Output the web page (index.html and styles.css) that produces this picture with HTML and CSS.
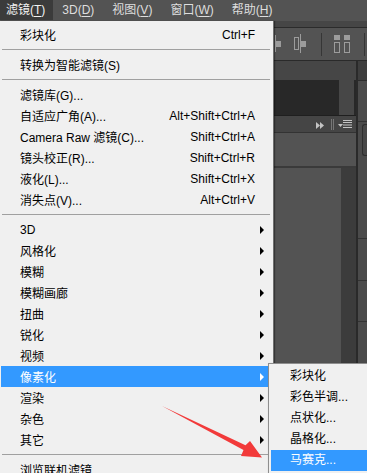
FILE: index.html
```html
<!DOCTYPE html>
<html lang="zh-CN">
<head>
<meta charset="utf-8">
<title>Photoshop 滤镜菜单</title>
<link rel="stylesheet" href="styles.css">
</head>
<body>
<div class="menubar">
  <span class="mb-item first active">滤镜(<u>T</u>)</span>
  <span class="mb-item">3D(<u>D</u>)</span>
  <span class="mb-item">视图(<u>V</u>)</span>
  <span class="mb-item">窗口(<u>W</u>)</span>
  <span class="mb-item">帮助(<u>H</u>)</span>
</div>
<div class="appstrip"></div>
<div class="options">
  <svg class="opt-icons" width="95" height="32" viewBox="0 0 95 32">
    <g fill="none" stroke="#9c9c9c" stroke-width="1">
      <line x1="3.5" y1="7" x2="3.5" y2="24"/>
      <rect x="22.5" y="9.5" width="4" height="12"/>
      <line x1="28.5" y1="6" x2="28.5" y2="25"/>
      <rect x="62.5" y="14.5" width="5" height="10"/>
      <rect x="72.5" y="14.5" width="5" height="10"/>
    </g>
    <g fill="#9c9c9c">
      <rect x="4" y="13" width="5" height="6"/>
      <rect x="29" y="13" width="5" height="6"/>
      <rect x="62" y="7" width="6" height="5"/>
      <rect x="72" y="7" width="6" height="5"/>
    </g>
    <line x1="49.5" y1="5" x2="49.5" y2="28" stroke="#363636"/>
    <line x1="92.5" y1="5" x2="92.5" y2="28" stroke="#363636"/>
  </svg>
</div>
<div class="work">
  <div class="main">
    <div class="phead"></div>
    <div class="dark"><div class="dark-fill"></div><div class="dark-scroll"></div></div>
    <div class="hline"></div>
    <div class="tabbar">
      <svg width="40" height="16" viewBox="0 0 40 16">
        <g fill="#c4c4c4">
          <polygon points="3,6 7,9.5 3,13"/>
          <polygon points="7,6 11,9.5 7,13"/>
          <polygon points="25,8 30,8 27.5,11"/>
          <rect x="30" y="4" width="9" height="1"/>
          <rect x="30" y="6" width="9" height="1"/>
          <rect x="30" y="8.5" width="9" height="1"/>
          <rect x="30" y="11" width="9" height="1"/>
        </g>
        <g stroke="#777" stroke-width="1">
          <line x1="18.5" y1="3" x2="18.5" y2="14"/>
          <line x1="20.5" y1="3" x2="20.5" y2="14"/>
        </g>
      </svg>
    </div>
    <div class="hline light"></div>
    <div class="prop"></div>
    <div class="hline thick"></div>
    <div class="rest"><div class="rest-fill"></div><div class="rest-col"></div></div>
  </div>
  <div class="vdiv"></div>
  <div class="side">
    <div class="shead"></div>
    <div class="sblock"></div>
    <div class="sbox"></div>
    <div class="sblock tall"></div>
    <div class="sblock mid"></div>
    <div class="sblock"></div>
  </div>
</div>

<div class="menu">
  <div class="mi"><span class="lbl">彩块化</span><span class="sc">Ctrl+F</span><span class="ar"></span></div>
  <div class="sep"></div>
  <div class="mi"><span class="lbl">转换为智能滤镜(S)</span><span class="ar"></span></div>
  <div class="sep"></div>
  <div class="mi"><span class="lbl">滤镜库(G)...</span><span class="ar"></span></div>
  <div class="mi"><span class="lbl">自适应广角(A)...</span><span class="sc">Alt+Shift+Ctrl+A</span><span class="ar"></span></div>
  <div class="mi"><span class="lbl">Camera Raw 滤镜(C)...</span><span class="sc">Shift+Ctrl+A</span><span class="ar"></span></div>
  <div class="mi"><span class="lbl">镜头校正(R)...</span><span class="sc">Shift+Ctrl+R</span><span class="ar"></span></div>
  <div class="mi"><span class="lbl">液化(L)...</span><span class="sc">Shift+Ctrl+X</span><span class="ar"></span></div>
  <div class="mi"><span class="lbl">消失点(V)...</span><span class="sc">Alt+Ctrl+V</span><span class="ar"></span></div>
  <div class="sep"></div>
  <div class="mi"><span class="lbl">3D</span><span class="ar sub"></span></div>
  <div class="mi"><span class="lbl">风格化</span><span class="ar sub"></span></div>
  <div class="mi"><span class="lbl">模糊</span><span class="ar sub"></span></div>
  <div class="mi"><span class="lbl">模糊画廊</span><span class="ar sub"></span></div>
  <div class="mi"><span class="lbl">扭曲</span><span class="ar sub"></span></div>
  <div class="mi"><span class="lbl">锐化</span><span class="ar sub"></span></div>
  <div class="mi"><span class="lbl">视频</span><span class="ar sub"></span></div>
  <div class="mi hl"><span class="lbl">像素化</span><span class="ar sub"></span></div>
  <div class="mi"><span class="lbl">渲染</span><span class="ar sub"></span></div>
  <div class="mi"><span class="lbl">杂色</span><span class="ar sub"></span></div>
  <div class="mi"><span class="lbl">其它</span><span class="ar sub"></span></div>
  <div class="sep"></div>
  <div class="mi"><span class="lbl">浏览联机滤镜...</span><span class="ar"></span></div>
</div>

<div class="submenu">
  <div class="si">彩块化</div>
  <div class="si">彩色半调...</div>
  <div class="si">点状化...</div>
  <div class="si">晶格化...</div>
  <div class="si hl">马赛克...</div>
  <div class="si">铜版雕刻...</div>
</div>

<svg class="callout" width="367" height="473" viewBox="0 0 367 473">
  <polygon points="162,406 245.5,445.2 250,441 262,457.5 241,456 243.5,450" fill="#f23a3a"/>
</svg>
</body>
</html>
```

FILE: styles.css
```css
html, body {
  margin: 0;
  padding: 0;
}
body {
  width: 367px;
  height: 473px;
  overflow: hidden;
  position: relative;
  background: #535353;
  font-family: "Liberation Sans", "Noto Sans CJK SC", sans-serif;
  font-size: 12px;
}

/* ---------- menu bar ---------- */
.menubar {
  display: flex;
  height: 21px;
  background: #535353;
  color: #dedede;
}
.mb-item {
  padding: 0 9px;
  line-height: 21px;
  white-space: nowrap;
}
.mb-item.first {
  padding: 0 8px 0 6px;
}
.mb-item.active {
  background: #3b3b3b;
  height: 20px;
  color: #f2f2f2;
}
.mb-item u {
  text-decoration: underline;
  text-underline-offset: 2px;
}

/* ---------- workspace behind the menu ---------- */
.appstrip {
  height: 6px;
  background: #464646;
  border-bottom: 1px solid #2b2b2b;
}
.options {
  height: 32px;
  background: #535353;
  border-bottom: 1px solid #2a2a2a;
  display: flex;
}
.opt-icons {
  margin-left: 272px;
  display: block;
}
.work {
  display: grid;
  grid-template-columns: 356px 2px 1fr;
  height: 412px;
}
.main {
  display: flex;
  flex-direction: column;
}
.phead {
  height: 19px;
  background: #464646;
}
.dark {
  height: 35px;
  display: flex;
  background: #282828;
  padding-right: 2px;
}
.dark-fill {
  flex: 1;
}
.dark-scroll {
  width: 15px;
  background: #474747;
}
.hline {
  height: 1px;
  background: #1f1f1f;
}
.hline.light {
  background: #333;
}
.hline.thick {
  height: 2px;
  background: #3a3a3a;
}
.tabbar {
  height: 16px;
  background: #454545;
  display: flex;
  justify-content: flex-end;
  padding-right: 3px;
}
.tabbar svg {
  display: block;
}
.prop {
  height: 33px;
  background: #535353;
}
.rest {
  flex: 1;
  display: flex;
}
.rest-fill {
  flex: 1;
  background: #535353;
}
.rest-col {
  width: 15px;
  background: #3c3c3c;
}
.vdiv {
  background: #2a2a2a;
}
.side {
  display: flex;
  flex-direction: column;
  background: #4b4b4b;
}
.shead {
  height: 19px;
  background: #3e3e3e;
  border-bottom: 1px solid #2c2c2c;
}
.sblock {
  height: 40px;
  border-bottom: 1px solid #333;
}
.sblock.tall {
  height: 72px;
}
.sblock.mid {
  height: 41px;
}
.sbox {
  height: 30px;
  margin: 2px 0 10px 4px;
  border: 1px solid #2e2e2e;
  border-right: none;
  border-radius: 3px 0 0 3px;
  background: #474747;
}

/* ---------- dropdown menu ---------- */
.menu {
  position: absolute;
  left: 0;
  top: 21px;
  width: 271px;
  padding: 3px 1px 0 1px;
  background: #f0f0f0;
  border-right: 1px solid #6f6f6f;
  box-shadow: 1px 0 1px rgba(0, 0, 0, 0.35);
  color: #000;
}
.mi {
  display: flex;
  align-items: center;
  height: 21px;
  padding-left: 19px;
  white-space: nowrap;
}
.mi .lbl {
  flex: 1;
}
.mi .ar {
  width: 17px;
  height: 21px;
  display: flex;
  align-items: center;
}
.mi .ar.sub::before {
  content: "";
  margin-left: 5px;
  border-left: 4px solid #000;
  border-top: 4px solid transparent;
  border-bottom: 4px solid transparent;
}
.mi.hl {
  background: #3399ff;
  color: #fff;
}
.mi.hl .ar.sub::before {
  border-left-color: #fff;
}
.sep {
  height: 9px;
  display: flex;
  align-items: center;
}
.sep::before {
  content: "";
  flex: 1;
  height: 1px;
  margin: 0 2px 0 1px;
  background: #a0a0a0;
}

/* ---------- sub menu ---------- */
.submenu {
  position: absolute;
  left: 268px;
  top: 363px;
  width: 110px;
  padding: 2px;
  background: #f0f0f0;
  border: 1px solid #8e8e8e;
  box-shadow: 1px 1px 2px rgba(0, 0, 0, 0.3);
  color: #000;
}
.si {
  height: 21px;
  line-height: 21px;
  padding-left: 19px;
  white-space: nowrap;
}
.si.hl {
  background: #3399ff;
  color: #fff;
}

/* ---------- red annotation arrow ---------- */
.callout {
  position: absolute;
  left: 0;
  top: 0;
  pointer-events: none;
}
```
